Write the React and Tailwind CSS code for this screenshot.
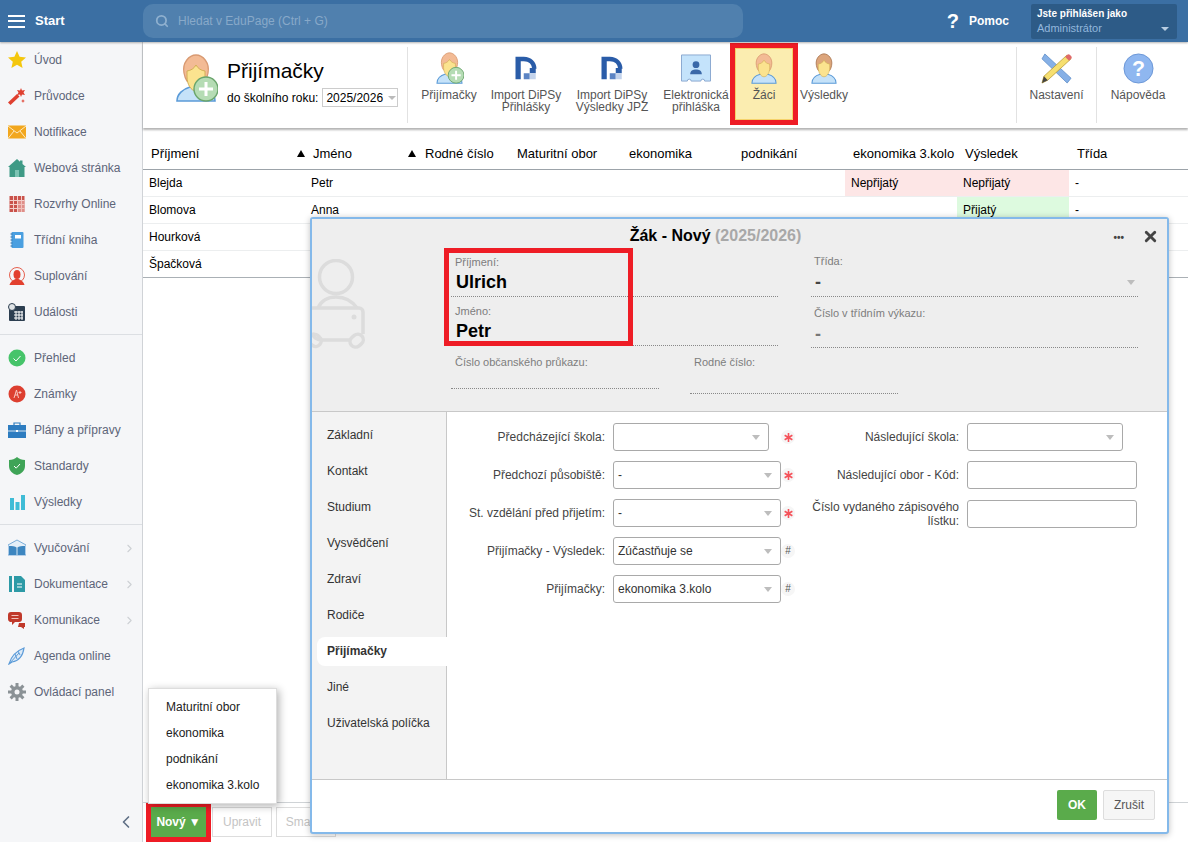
import { Search, ChevronRight, ChevronLeft, X } from 'lucide-react'

const Person = ({ className, plus, dark }) => (
  <svg viewBox="0 0 44 48" className={className}>
    <path d="M3 47c0-7 6-12 13-14h12c7 2 13 7 13 14z" fill="#c5e2f9" stroke="#5b9bd8" strokeWidth="1.6" />
    <path d="M10 19C8 9 15 1 22 1s14 8 12 18c-.5 3-1.500 6-3 8H13c-1.500-2-2.500-5-3-8z" fill={dark ? '#dca57c' : '#f3bb95'} stroke={dark ? '#a9754f' : '#d99a72'} strokeWidth="1.300" />
    <path d="M13 17c4-.5 7-2.500 9-6 2 3.500 5 5.500 9 6v6c0 7-4 14-9 14s-9-7-9-14z" fill="#fbe38f" stroke="#d3ae55" strokeWidth="1" />
    {plus && (
      <>
        <circle cx="32" cy="35" r="12" fill="#b5dcb4" stroke="#6aa56c" strokeWidth="1.400" />
        <path d="M32 28v14M25 35h14" stroke="#fff" strokeWidth="3" />
      </>
    )}
  </svg>
)

const DipsyLogo = () => (
  <svg viewBox="0 0 32 32" className="h-[26px] w-[24px]">
    <path d="M2 1h11c10 0 17 7 17 16h-6c0-6-4-10-11-10H9v24H2z" fill="#2a5ca8" />
    <rect x="21" y="16" width="8" height="7" fill="#2a5ca8" />
    <rect x="13" y="23" width="8" height="8" fill="#5b84c4" />
    <rect x="21" y="23" width="8" height="8" fill="#c3d3ec" />
  </svg>
)

const CardIcon = () => (
  <svg viewBox="0 0 32 30" className="h-[29px] w-[32px]">
    <path d="M1 1h30v27h-6a2 2 0 0 0-4 0H11a2 2 0 0 0-4 0H1z" fill="#c4e3fb" stroke="#8aa8d0" strokeWidth="1" />
    <circle cx="16" cy="11" r="3.500" fill="#3a68a8" />
    <path d="M10 21c0-4 3-5 6-5s6 1 6 5z" fill="#3a68a8" />
  </svg>
)

const SettingsIcon = () => (
  <svg viewBox="0 0 32 32" className="h-[31px] w-[31px]">
    <path d="M4 1 31 26l-4 5L1 6z" fill="#86b0e6" stroke="#5a8cc8" strokeWidth="0.800" />
    <path d="M27 2l4 4L7 28l-6 3 2-7z" fill="#f6df70" stroke="#b89a35" strokeWidth="0.800" />
    <path d="M25 4l2-2c1-1 2-1 3 0l1 1c1 1 1 2 0 3l-2 2z" fill="#e06a6a" />
    <path d="M1 31l2-7 4 4z" fill="#444" />
  </svg>
)

const HelpIcon = () => (
  <svg viewBox="0 0 32 32" className="h-[31px] w-[31px]">
    <circle cx="16" cy="16" r="15" fill="#8fb7f0" stroke="#6a96d6" strokeWidth="1" />
    <text x="16" y="24" textAnchor="middle" fontSize="22" fontWeight="700" fill="#fff" fontFamily="Liberation Sans">?</text>
  </svg>
)

const sideIcons = {
  star: <path d="M9 0l2.600 5.800 6.400.7-4.800 4.200L14.600 17 9 13.700 3.400 17l1.400-6.300L0 6.500l6.400-.7z" fill="#f4c70e" />,
  wand: (
    <>
      <path d="M0 15.500L9 7l2.500 2.500L2.500 18z" fill="#df4030" />
      <path d="M13 1l1 2.500 3-.5-1.500 2.500L17 8l-3-.5L13 10l-1-2.500L9 8l1.500-2.500L9 3l3 .5z" fill="#df4030" />
      <path d="M15 12l.6 1.400L17 14l-1.400.6L15 16l-.6-1.400L13 14l1.400-.6z" fill="#df4030" />
    </>
  ),
  mail: (
    <>
      <rect y="2.500" width="18" height="13" fill="#f2a71e" />
      <path d="M0 3l9 7 9-7M0 15.500l6-7.500M18 15.500l-6-7.500" stroke="#fde9bf" strokeWidth="1" fill="none" />
    </>
  ),
  home: (
    <>
      <path d="M9 0l3 2.700V1.500h2.500V5L18 8h-1.500v10h-15V8H0z" fill="#3f9a86" />
      <rect x="7" y="11" width="4" height="7" fill="#7cc3b3" />
    </>
  ),
  grid: (
    <>
      <rect x="1.500" y="1" width="15" height="16" fill="#c9524b" />
      <path d="M1.500 5.500h15M1.500 9.500h15M1.500 13.500h15M5.500 1v16M9.500 1v16M13.500 1v16" stroke="#f3cfcb" strokeWidth="1" />
      <rect x="10" y="6" width="6.500" height="11" fill="#eeb7b2" opacity="0.600" />
    </>
  ),
  book: (
    <>
      <rect x="3.500" y="1" width="12" height="16" rx="1" fill="#4a9fe0" />
      <rect x="7" y="4" width="6" height="3.500" fill="#fff" />
      <path d="M2.500 3h2M2.500 6h2M2.500 9h2M2.500 12h2M2.500 15h2" stroke="#2a6ca8" strokeWidth="1" />
    </>
  ),
  sub: (
    <>
      <circle cx="9" cy="8" r="7.500" fill="none" stroke="#e5604f" strokeWidth="1" />
      <ellipse cx="9" cy="7.500" rx="3.500" ry="4.500" fill="#e2402f" />
      <path d="M1.500 18c.5-3 3.500-5 6-6h3c2.500 1 5.500 3 6 6z" fill="#e2402f" />
    </>
  ),
  event: (
    <>
      <rect x="1" y="3" width="16" height="15" rx="1" fill="#2c3e50" />
      <path d="M6 9h9M6 12h9M6 15h9M8 8v9M11 8v9M14 8v9" stroke="#fff" strokeWidth="1" />
      <circle cx="4" cy="4" r="3.500" fill="#dfe3e6" stroke="#2c3e50" strokeWidth="1" />
    </>
  ),
  check: (
    <>
      <circle cx="9" cy="9" r="8.500" fill="#46c46a" />
      <path d="M5.500 9.500l2.500 2.500 4.500-5" stroke="#fff" strokeWidth="1" fill="none" />
    </>
  ),
  grade: (
    <>
      <circle cx="9" cy="9" r="8.500" fill="#dd3f30" />
      <path d="M6 13l2.500-8 2 8M7 10h3M12 6v3M10.500 7.500h3" stroke="#f8c8c2" strokeWidth="1" fill="none" />
    </>
  ),
  case: (
    <>
      <path d="M6 4V2h6v2" stroke="#2d7cc0" strokeWidth="1.200" fill="none" />
      <rect y="4" width="18" height="13" fill="#2d7cc0" />
      <path d="M0 10h18" stroke="#fff" strokeWidth="0.800" />
      <rect x="8" y="9" width="2" height="2" fill="#fff" />
    </>
  ),
  shield: (
    <>
      <path d="M9 0c2 2 5 3 8 3v6c0 5-4 8-8 9-4-1-8-4-8-9V3c3 0 6-1 8-3z" fill="#3fa457" />
      <path d="M6 9l2.200 2.200L12 7" stroke="#fff" strokeWidth="1" fill="none" />
    </>
  ),
  bars: (
    <>
      <rect x="2" y="5" width="4" height="12" fill="#3fbcd6" />
      <rect x="7.500" y="9" width="4" height="8" fill="#3fbcd6" />
      <rect x="13" y="2" width="4" height="15" fill="#3fbcd6" />
    </>
  ),
  open: (
    <>
      <path d="M9 1L0 6v10h18V6z" fill="#e4eff8" stroke="#5d9ad0" strokeWidth="0.800" />
      <path d="M1 7c3 0 6 0 8 2 2-2 5-2 8-2v9H1z" fill="#3d86c0" />
      <path d="M9 9v7" stroke="#fff" strokeWidth="0.800" />
    </>
  ),
  doc: (
    <>
      <rect x="1" y="1" width="3" height="16" fill="#2d9aa6" />
      <path d="M6 1h7l4 4v12H6z" fill="#2d9aa6" />
      <path d="M9 9h5M9 12h5" stroke="#fff" strokeWidth="1" />
    </>
  ),
  chat: (
    <>
      <path d="M3 1h8a3 3 0 0 1 3 3v4a3 3 0 0 1-3 3H7l-3 3v-3.200A3 3 0 0 1 0 8V4a3 3 0 0 1 3-3z" fill="#c0392b" />
      <path d="M3.500 4.500h7M3.500 7.500h7" stroke="#f2c3bd" strokeWidth="1" />
      <path d="M11 12h6v4h-1v2l-3-2h-3z" fill="#c0392b" />
    </>
  ),
  pen: (
    <>
      <path d="M1 17c2-7 7-13 15-16-1 7-5 13-12 14z" fill="#dbe9f7" stroke="#5b9bd8" strokeWidth="1.200" />
      <path d="M1 17L11 6M7 7l2 5M10 4l2 4" stroke="#5b9bd8" strokeWidth="1" fill="none" />
    </>
  ),
  gear: (
    <>
      <circle cx="9" cy="9" r="6" fill="#8b9296" />
      <path d="M9 0v18M0 9h18M2.600 2.600l12.800 12.800M15.400 2.600L2.600 15.400" stroke="#8b9296" strokeWidth="3" />
      <circle cx="9" cy="9" r="2.500" fill="#f5f6f8" />
    </>
  ),
}

const menuGroups = [
  [
    ['star', 'Úvod'],
    ['wand', 'Průvodce'],
    ['mail', 'Notifikace'],
    ['home', 'Webová stránka'],
    ['grid', 'Rozvrhy Online'],
    ['book', 'Třídní kniha'],
    ['sub', 'Suplování'],
    ['event', 'Události'],
  ],
  [
    ['check', 'Přehled'],
    ['grade', 'Známky'],
    ['case', 'Plány a přípravy'],
    ['shield', 'Standardy'],
    ['bars', 'Výsledky'],
  ],
  [
    ['open', 'Vyučování', true],
    ['doc', 'Dokumentace', true],
    ['chat', 'Komunikace', true],
    ['pen', 'Agenda online'],
    ['gear', 'Ovládací panel'],
  ],
]

const Sidebar = () => (
  <aside className="flex w-[143px] shrink-0 flex-col border-r border-[#d0d3d7] bg-[#f5f6f8]">
    {menuGroups.map((group, i) => (
      <div key={i} className={i > 0 ? 'mt-[4px] border-t border-[#dcdfe3] pt-[5px]' : ''}>
        {group.map(([icon, label, more]) => (
          <div key={label} className="flex h-[36px] items-center pl-[8px] pr-[6px] text-[12px] text-[#5d6579]">
            <svg viewBox="0 0 18 18" className="mr-[8px] h-[18px] w-[18px] shrink-0">
              {sideIcons[icon]}
            </svg>
            <span className="flex-1">{label}</span>
            {more && <ChevronRight size={13} className="text-[#cdd0d4]" />}
          </div>
        ))}
      </div>
    ))}
    <div className="mt-auto flex h-[40px] items-center justify-end pr-[6px]">
      <ChevronLeft size={20} className="text-[#5f6f85]" />
    </div>
  </aside>
)

const ToolItem = ({ icon, lines, active }) => (
  <div
    className={
      active
        ? 'mt-px flex h-[82px] w-[68px] shrink-0 flex-col items-center border-[5px] border-[#ee1c25] bg-[#fbedb0] pt-[4px] text-[12px] leading-[12px] text-[#555] shadow-[inset_0_0_0_1px_#f5d26a]'
        : 'mt-px flex h-[82px] shrink-0 flex-col items-center pt-[9px] text-[12px] leading-[12px] text-[#555]'
    }
  >
    <div className="flex h-[32px] items-center justify-center">{icon}</div>
    <div className="mt-[5px] whitespace-nowrap text-center">
      {lines.map((l) => (
        <div key={l}>{l}</div>
      ))}
    </div>
  </div>
)

const Toolbar = () => (
  <div className="relative z-10 flex h-[86px] shrink-0 bg-white pr-[9px] shadow-[0_2px_2px_rgba(0,0,0,0.3)]">
    <div className="flex w-[264px] shrink-0 items-start pl-[31px] pt-[12px]">
      <Person plus className="h-[48px] w-[44px]" />
      <div className="ml-[9px] pt-[4px]">
        <div className="text-[21px] leading-[26px] text-black">Přijímačky</div>
        <div className="mt-[4px] flex items-center text-[12px] text-black">
          do školního roku:
          <div className="ml-[4px] flex h-[19px] w-[76px] items-center border border-[#ccc] pl-[3px] text-[12px]">
            2025/2026
            <span className="ml-[5px] h-0 w-0 border-x-[4px] border-t-[4px] border-x-transparent border-t-[#bbb]" />
          </div>
        </div>
      </div>
    </div>
    <div className="my-[5px] w-px shrink-0 bg-[#e2e2e2]" />
    <div className="flex w-[322px] shrink-0">
      <div className="flex w-[75px] shrink-0 justify-center pl-[7px]">
        <ToolItem lines={['Přijímačky']} icon={<Person plus className="h-[32px] w-[29px]" />} />
      </div>
      <div className="flex w-[86px] shrink-0 justify-center">
        <ToolItem lines={['Import DiPSy', 'Přihlášky']} icon={<DipsyLogo />} />
      </div>
      <div className="flex w-[86px] shrink-0 justify-center">
        <ToolItem lines={['Import DiPSy', 'Výsledky JPZ']} icon={<DipsyLogo />} />
      </div>
      <div className="flex w-[75px] shrink-0 justify-center pl-[7px]">
        <ToolItem lines={['Elektronická', 'přihláška']} icon={<CardIcon />} />
      </div>
    </div>
    <ToolItem active lines={['Žáci']} icon={<Person className="h-[31px] w-[28px]" />} />
    <div className="flex w-[52px] shrink-0 justify-center">
      <ToolItem lines={['Výsledky']} icon={<Person dark className="h-[31px] w-[28px]" />} />
    </div>
    <div className="flex-1" />
    <div className="my-[5px] w-px shrink-0 bg-[#e2e2e2]" />
    <div className="flex w-[79px] shrink-0 justify-center">
      <ToolItem lines={['Nastavení']} icon={<SettingsIcon />} />
    </div>
    <div className="my-[5px] w-px shrink-0 bg-[#e2e2e2]" />
    <div className="flex w-[82px] shrink-0 justify-center">
      <ToolItem lines={['Nápověda']} icon={<HelpIcon />} />
    </div>
  </div>
)

const columns = 'grid grid-cols-[162px_112px_92px_112px_112px_112px_112px_112px_112px]'

const rows = [
  { name: 'Blejda', first: 'Petr', round: 'Nepřijatý', result: 'Nepřijatý', bad: true },
  { name: 'Blomova', first: 'Anna', round: '', result: 'Přijatý' },
  { name: 'Hourková', first: '', round: '', result: '' },
  { name: 'Špačková', first: '', round: '', result: '' },
]

const StudentTable = () => (
  <div className="flex-1 text-black">
    <div className={`${columns} h-[42px] items-end border-b border-[#9ca3a9] pb-[8px] text-[13px] leading-[15px]`}>
      <div className="relative pl-[8px]">
        Příjmení
        <span className="absolute right-0 top-[4px] h-0 w-0 border-x-[4px] border-b-[7px] border-x-transparent border-b-black" />
      </div>
      <div className="relative pl-[8px]">
        Jméno
        <span className="absolute right-[1px] top-[4px] h-0 w-0 border-x-[4px] border-b-[7px] border-x-transparent border-b-black" />
      </div>
      <div className="pl-[8px]">Rodné číslo</div>
      <div className="pl-[8px]">Maturitní obor</div>
      <div className="pl-[8px]">ekonomika</div>
      <div className="pl-[8px]">podnikání</div>
      <div className="pl-[8px]">ekonomika 3.kolo</div>
      <div className="pl-[8px]">Výsledek</div>
      <div className="pl-[8px]">Třída</div>
    </div>
    {rows.map((r, i) => (
      <div
        key={r.name}
        className={`${columns} h-[27px] border-b text-[12px] leading-[26px] ${i === rows.length - 1 ? 'border-[#aab0b5]' : 'border-[#eceeef]'}`}
      >
        <div className="pl-[6px]">{r.name}</div>
        <div className="pl-[6px]">{r.first}</div>
        <div />
        <div />
        <div />
        <div />
        <div className={r.bad ? 'bg-[#fde6e6] pl-[6px]' : 'pl-[6px]'}>{r.round}</div>
        <div className={r.bad ? 'bg-[#fde6e6] pl-[6px]' : r.result ? 'bg-[#ddfadf] pl-[6px]' : 'pl-[6px]'}>{r.result}</div>
        <div className="pl-[6px]">{r.result ? '-' : ''}</div>
      </div>
    ))}
  </div>
)

const BottomBar = () => (
  <div className="flex h-[40px] shrink-0 items-start gap-[1px] border-t border-[#cfd3d6] pl-[3px] text-[12px]">
    <div className="border-[5px] border-t-[4px] border-[#ee1c25]">
      <div className="flex h-[30px] w-[55px] items-center justify-center bg-[#5aab4b] font-bold text-white">
        Nový <span className="ml-[3px] text-[12px] leading-none">▼</span>
      </div>
    </div>
    <div className="mt-[4px] flex h-[30px] w-[60px] items-center justify-center border border-[#ddd] text-[#c4c4c4]">Upravit</div>
    <div className="ml-[3px] mt-[4px] flex h-[30px] w-[60px] items-center justify-center border border-[#ddd] text-[#c4c4c4]">Smazat</div>
  </div>
)

const HeadField = ({ label, value, className, lineClass }) => (
  <div className={className}>
    <div className="text-[11px] leading-[13px] text-[#7d7d7d]">{label}</div>
    <div className={lineClass}>{value}</div>
  </div>
)

const tabs = ['Základní', 'Kontakt', 'Studium', 'Vysvědčení', 'Zdraví', 'Rodiče', 'Přijímačky', 'Jiné', 'Uživatelská políčka']

const Caret = () => <span className="h-0 w-0 border-x-[4px] border-t-[5px] border-x-transparent border-t-[#bdbdbd]" />

const Select = ({ value, w }) => (
  <div className={`flex h-[28px] shrink-0 items-center justify-between rounded-[3px] border border-[#a9a9a9] bg-white pl-[4px] pr-[8px] text-[12px] text-[#333] ${w}`}>
    <span>{value}</span>
    <Caret />
  </div>
)

const Mark = ({ children }) => (
  <span className="flex h-[14px] w-[14px] items-center justify-center rounded-full bg-[#f6f6f6]">{children}</span>
)
const Req = () => (
  <Mark>
    <svg viewBox="0 0 10 10" className="h-[9px] w-[9px]" stroke="#f5525a" strokeWidth="1.800">
      <path d="M5 0v10M.7 2.500l8.600 5M9.300 2.500l-8.600 5" />
    </svg>
  </Mark>
)
const Hash = () => (
  <Mark>
    <span className="text-[10px] leading-none text-[#555]">#</span>
  </Mark>
)

const leftFields = [
  ['Předcházející škola:', '', 'w-[156px]', 'ml-[12px]', <Req key="r" />],
  ['Předchozí působiště:', '-', 'w-[168px]', '', <Req key="r" />],
  ['St. vzdělání před přijetím:', '-', 'w-[168px]', '', <Req key="r" />],
  ['Přijímačky - Výsledek:', 'Zúčastňuje se', 'w-[168px]', '', <Hash key="h" />],
  ['Přijímačky:', 'ekonomika 3.kolo', 'w-[168px]', '', <Hash key="h" />],
]

const FormLabel = ({ children, w }) => (
  <div className={`mr-[8px] shrink-0 text-right text-[12px] leading-[14px] text-[#444] ${w}`}>{children}</div>
)

const StudentModal = () => (
  <div className="absolute left-[310px] top-[217px] z-20 flex h-[617px] w-[859px] flex-col rounded-[3px] border-2 border-[#84b9ea] bg-white text-[12px] shadow-[0_1px_6px_rgba(0,0,0,0.25)]">
    <div className="relative h-[193px] shrink-0 border-b border-[#c8c8c8] bg-[#eeeeee]">
      <div className="pr-[48px] pt-[7px] text-center text-[16px] font-bold leading-[20px] text-black">
        Žák - Nový <span className="text-[#a8a8a8]">(2025/2026)</span>
      </div>
      <div className="absolute right-[43px] top-[14px] text-[10px] font-bold leading-[10px] text-[#444]">•••</div>
      <X size={17} strokeWidth={4} className="absolute right-[8px] top-[9px] text-[#444]" />

      <svg viewBox="0 0 60 92" className="absolute left-0 top-[40px] h-[92px] w-[60px]" fill="none" stroke="#dcdcdc" strokeWidth="3.500">
        <circle cx="24" cy="18" r="16.500" />
        <path d="M6 49c3-7 10-11 18-11s16 4 21 11" />
        <path d="M0 49h47a4 4 0 0 1 4 4v22M0 74c1 4 5 7 10 7h28" />
        <circle cx="42" cy="58" r="2.500" fill="#dcdcdc" stroke="none" />
        <rect x="38" y="76" width="14" height="11" rx="5.500" transform="rotate(-40 45 82)" />
        <rect x="-4" y="76" width="13" height="11" rx="5.500" transform="rotate(40 3 82)" />
      </svg>

      <div className="mt-[10px] flex pl-[139px]">
        <div className="w-[327px] shrink-0">
          <HeadField
            label={<span className="pl-[4px]">Příjmení:</span>}
            value="Ulrich"
            lineClass="h-[28px] border-b border-dotted border-[#888] pl-[5px] text-[18px] font-bold leading-[26px] text-black"
          />
          <HeadField
            className="mt-[8px]"
            label={<span className="pl-[4px]">Jméno:</span>}
            value="Petr"
            lineClass="h-[28px] border-b border-dotted border-[#888] pl-[5px] text-[18px] font-bold leading-[27px] text-black"
          />
          <div className="mt-[10px] flex">
            <HeadField
              className="w-[208px] shrink-0"
              label={<span className="pl-[4px]">Číslo občanského průkazu:</span>}
              lineClass="h-[20px] border-b border-dotted border-[#888]"
            />
            <HeadField
              className="ml-[31px] w-[208px] shrink-0"
              label={<span className="pl-[4px]">Rodné číslo:</span>}
              lineClass="h-[25px] border-b border-dotted border-[#888]"
            />
          </div>
        </div>
        <div className="-mt-px ml-[33px] w-[327px] shrink-0">
          <HeadField
            label={<span className="pl-[3px]">Třída:</span>}
            value={
              <div className="flex items-center justify-between pr-[3px]">
                <span>-</span>
                <Caret />
              </div>
            }
            lineClass="h-[29px] border-b border-dotted border-[#888] pl-[4px] text-[18px] font-bold leading-[28px] text-[#444]"
          />
          <HeadField
            className="mt-[10px]"
            label={<span className="pl-[3px]">Číslo v třídním výkazu:</span>}
            value="-"
            lineClass="h-[28px] border-b border-dotted border-[#888] pl-[4px] text-[18px] font-bold leading-[28px] text-[#777]"
          />
        </div>
      </div>
      <div className="absolute left-[132px] top-[29px] h-[98px] w-[189px] border-[5px] border-[#ee1c25]" />
    </div>

    <div className="flex min-h-0 flex-1">
      <div className="w-[135px] shrink-0 border-r border-[#c8c8c8] bg-[#f3f3f3] pl-[5px] pt-[5px]">
        {tabs.map((t) => (
          <div key={t} className="flex h-[36px] items-center">
            <div
              className={
                t === 'Přijímačky'
                  ? 'relative -mr-px flex h-[29px] w-[130px] items-center rounded-l-[8px] bg-white pl-[10px] font-bold text-[#333]'
                  : 'pl-[10px] font-medium text-[#333]'
              }
            >
              {t}
            </div>
          </div>
        ))}
      </div>
      <div className="flex flex-1 pt-[11px]">
        <div className="w-[346px] shrink-0">
          {leftFields.map(([label, value, w, gap, mark]) => (
            <div key={label} className="mb-[10px] flex h-[28px] items-center pl-[2px]">
              <FormLabel w="w-[156px]">{label}</FormLabel>
              <Select value={value} w={w} />
              <span className={gap}>{mark}</span>
            </div>
          ))}
        </div>
        <div className="flex flex-col">
          <div className="mb-[10px] flex h-[28px] items-center">
            <FormLabel w="w-[166px]">Následující škola:</FormLabel>
            <Select value="" w="w-[156px]" />
          </div>
          <div className="mb-[11px] flex h-[28px] items-center">
            <FormLabel w="w-[166px]">Následující obor - Kód:</FormLabel>
            <div className="h-[28px] w-[170px] rounded-[3px] border border-[#a9a9a9] bg-white" />
          </div>
          <div className="flex h-[28px] items-center">
            <FormLabel w="w-[166px]">
              Číslo vydaného zápisového
              <br />
              lístku:
            </FormLabel>
            <div className="h-[28px] w-[170px] rounded-[3px] border border-[#a9a9a9] bg-white" />
          </div>
        </div>
      </div>
    </div>

    <div className="flex h-[53px] shrink-0 items-start justify-end gap-[6px] border-t border-[#c8c8c8] pr-[12px] pt-[10px]">
      <div className="flex h-[30px] w-[40px] items-center justify-center rounded-[2px] bg-[#5aab4b] font-bold text-white">OK</div>
      <div className="flex h-[30px] w-[52px] items-center justify-center rounded-[2px] border border-[#ddd] bg-[#f6f6f6] text-[#555]">Zrušit</div>
    </div>
  </div>
)

const NewMenu = () => (
  <div className="absolute left-[148px] top-[688px] z-20 w-[129px] border border-[#ddd] bg-white py-[5px] text-[12px] text-[#222] shadow-[2px_2px_8px_rgba(0,0,0,0.3)]">
    {['Maturitní obor', 'ekonomika', 'podnikání', 'ekonomika 3.kolo'].map((t) => (
      <div key={t} className="flex h-[26px] items-center pl-[17px]">
        {t}
      </div>
    ))}
  </div>
)

export default function App() {
  return (
    <div className="relative flex h-[842px] w-full flex-col overflow-hidden bg-white font-['Liberation_Sans',Arial,sans-serif]">
      <header className="relative z-20 flex h-[42px] shrink-0 items-center bg-[#3b6fa3] shadow-[0_1px_2px_rgba(0,0,0,0.3)]">
        <div className="flex w-[143px] shrink-0 items-center pl-[8px]">
          <div className="flex h-[13px] w-[17px] flex-col justify-between">
            <span className="h-[2px] bg-white" />
            <span className="h-[2px] bg-white" />
            <span className="h-[2px] bg-white" />
          </div>
          <span className="ml-[10px] text-[13px] font-bold text-white">Start</span>
        </div>
        <div className="flex h-[34px] w-[600px] items-center rounded-[10px] bg-[#5080ae] pl-[12px] text-[12px] text-[#88a9c9]">
          <Search size={14} strokeWidth={3} className="text-[#8fb0cf]" />
          <span className="ml-[9px]">Hledat v EduPage (Ctrl + G)</span>
        </div>
        <div className="flex-1" />
        <span className="text-[20px] font-bold text-white">?</span>
        <span className="ml-[10px] text-[12px] font-bold text-white">Pomoc</span>
        <div className="ml-[22px] mr-[11px] h-[35px] w-[146px] rounded-[2px] bg-[#2d5b87] pl-[6px] pt-[3px] text-[11px] leading-[14px]">
          <div className="text-[10px] font-bold text-white">Jste přihlášen jako</div>
          <div className="flex items-center justify-between pr-[8px] text-[#93b7dc]">
            Administrátor
            <span className="mt-[3px] h-0 w-0 border-x-[4px] border-t-[4px] border-x-transparent border-t-[#b8cde2]" />
          </div>
        </div>
      </header>
      <div className="flex min-h-0 flex-1">
        <Sidebar />
        <main className="flex min-w-0 flex-1 flex-col">
          <Toolbar />
          <StudentTable />
          <BottomBar />
        </main>
      </div>
      <StudentModal />
      <NewMenu />
    </div>
  )
}
